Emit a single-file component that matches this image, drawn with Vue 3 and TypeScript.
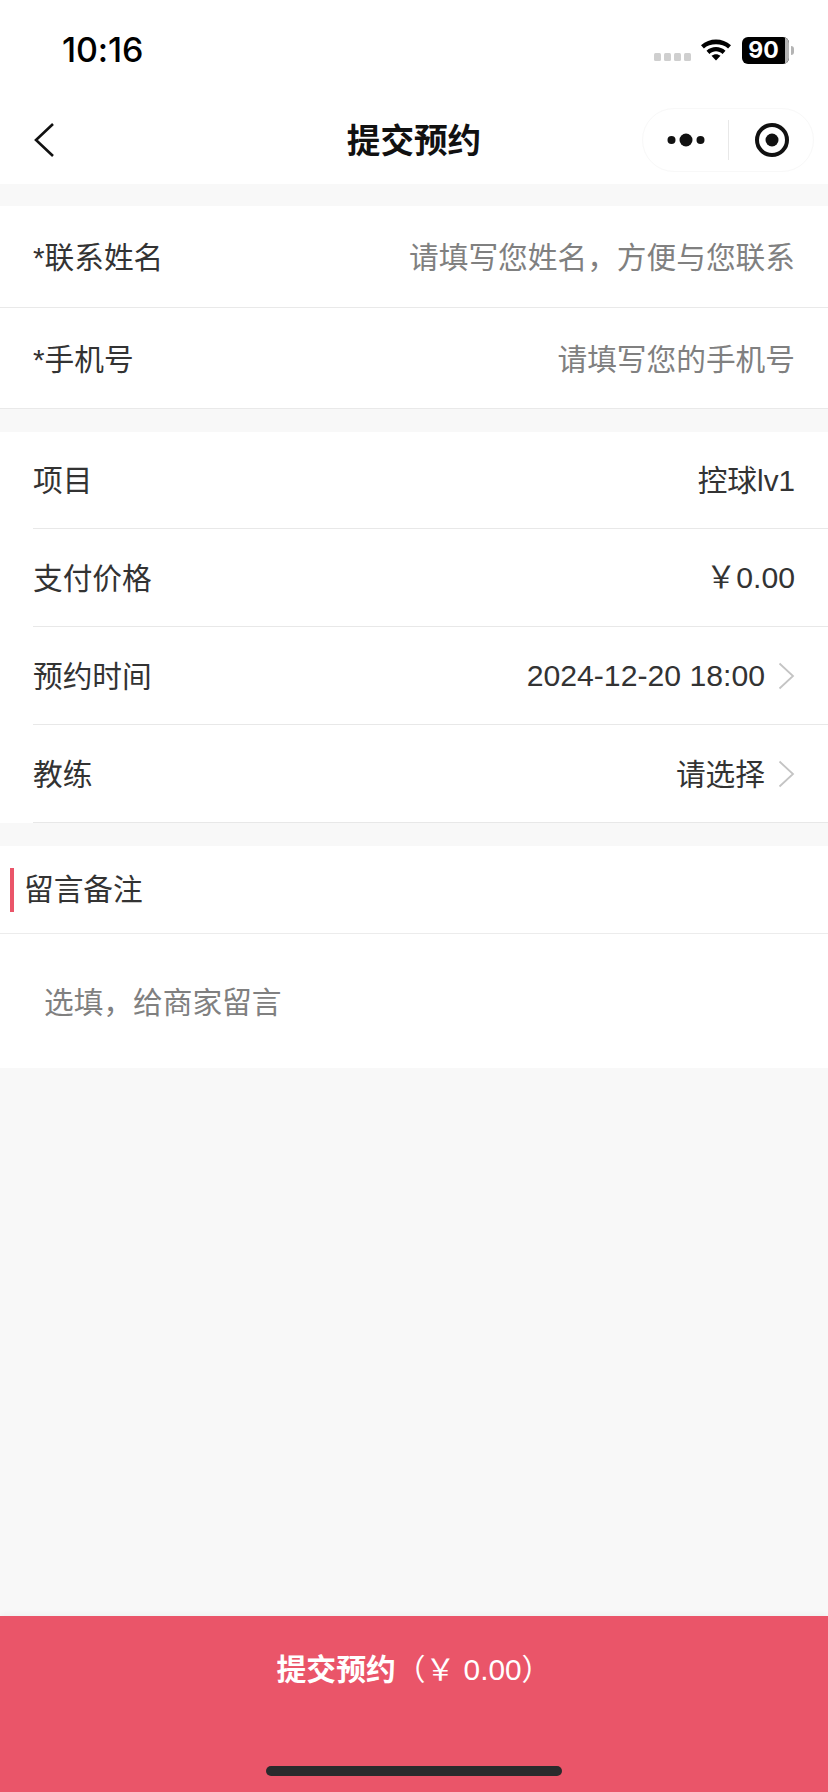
<script setup lang="ts">
interface InfoRow { label: string; value: string; arrow?: boolean; latin?: boolean }
const contactRows = [
  { label: '*联系姓名', hint: '请填写您姓名，方便与您联系' },
  { label: '*手机号', hint: '请填写您的手机号' },
]
const infoRows: InfoRow[] = [
  { label: '项目', value: '控球lv1' },
  { label: '支付价格', value: '￥0.00', latin: true },
  { label: '预约时间', value: '2024-12-20 18:00', arrow: true, latin: true },
  { label: '教练', value: '请选择', arrow: true },
]
</script>

<template>
  <div class="page">
    <header class="top">
      <div class="status">
        <span class="time">10:16</span>
        <div class="status-icons">
          <div class="signal"><i></i><i></i><i></i><i></i></div>
          <svg class="wifi" width="32" height="24" viewBox="0 0 32 24">
            <path d="M1 8.200C9.500 .6 22.500 .6 31 8.200l-2.900 3.200C22 5.800 10 5.800 3.900 11.400z" fill="#000"/>
            <path d="M6.500 13.800c5.500-5 13.500-5 19 0l-2.900 3.100c-4-3.400-9.200-3.400-13.200 0z" fill="#000"/>
            <path d="M11.500 18.800c2.700-2.200 6.300-2.200 9 0L16 23.500z" fill="#000"/>
          </svg>
          <div class="battery"><span class="level">90</span><span class="rest"></span></div>
          <span class="nub"></span>
        </div>
      </div>
      <div class="nav">
        <svg class="back" width="22" height="36" viewBox="0 0 22 36">
          <path d="M20 2 3 18l17 16" fill="none" stroke="#111" stroke-width="2.600"/>
        </svg>
        <span class="title">提交预约</span>
        <div class="capsule">
          <svg width="38" height="14" viewBox="0 0 38 14">
            <circle cx="4.500" cy="7" r="4" fill="#111"/>
            <circle cx="19" cy="7" r="6.500" fill="#111"/>
            <circle cx="33.500" cy="7" r="4" fill="#111"/>
          </svg>
          <span class="cap-line"></span>
          <svg width="36" height="36" viewBox="0 0 36 36">
            <circle cx="18" cy="18" r="15" fill="none" stroke="#111" stroke-width="4"/>
            <circle cx="18" cy="18" r="6.500" fill="#111"/>
          </svg>
        </div>
      </div>
    </header>

    <section class="group first">
      <div v-for="row in contactRows" :key="row.label" class="row contact">
        <span class="label">{{ row.label }}</span>
        <span class="hint">{{ row.hint }}</span>
      </div>
    </section>

    <section class="group">
      <div v-for="row in infoRows" :key="row.label" class="row info">
        <span class="label">{{ row.label }}</span>
        <div class="val-wrap">
          <span class="label" :class="{ latin: row.latin }">{{ row.value }}</span>
          <svg v-if="row.arrow" class="arrow" width="17" height="28" viewBox="0 0 17 28">
            <path d="M1.500 1.500 15 14 1.500 26.500" fill="none" stroke="#c4c4c4" stroke-width="1.800"/>
          </svg>
        </div>
      </div>
    </section>

    <section class="group remark">
      <div class="remark-head"><span class="bar"></span><span class="label">留言备注</span></div>
      <div class="remark-body"><span class="hint">选填，给商家留言</span></div>
    </section>

    <div class="spacer"></div>

    <footer class="submit">
      <div class="submit-text"><b>提交预约</b><span>（￥ 0.00）</span></div>
      <span class="home"></span>
    </footer>
  </div>
</template>

<style scoped>
.page {
  width: 828px;
  height: 1792px;
  display: flex;
  flex-direction: column;
  background: #f8f8f8;
  font-family: "Liberation Sans", "Noto Sans CJK SC", sans-serif;
  color: #333;
  overflow: hidden;
}
.top { background: #fff; height: 184px; flex: none; }
.status {
  height: 92px;
  padding: 8px 34px 0 62px;
  box-sizing: border-box;
  display: flex;
  align-items: center;
  justify-content: space-between;
}
.time { font: 500 34px/1 Inter, "Liberation Sans", sans-serif; color: #000; letter-spacing: -0.1px; }
.status-icons { display: flex; align-items: center; }
.signal { display: flex; gap: 3px; margin-right: 9px; margin-top: 13px; }
.signal i { width: 7px; height: 8px; border-radius: 1.500px; background: #cfcfcf; display: block; }
.wifi { margin-right: 10px; margin-top: -2px; }
.battery {
  width: 47px;
  height: 27px;
  border-radius: 6px;
  overflow: hidden;
  background: #000;
  display: flex;
}
.level {
  flex: 1;
  font: 700 23px/27px Inter, "Liberation Sans", sans-serif;
  color: #fff;
  text-align: center;
}
.rest { width: 4px; background: #b4b4b4; }
.nub { width: 3px; height: 9px; background: #b4b4b4; border-radius: 0 3px 3px 0; margin-left: 2px; }
.nav {
  height: 92px;
  position: relative;
  display: flex;
  align-items: center;
  justify-content: center;
}
.back { position: absolute; left: 33px; top: 30px; }
.title { font-size: 33.600px; font-weight: 700; color: #111; line-height: 1; margin-top: 7px; }
.capsule {
  position: absolute;
  left: 642px;
  top: 16px;
  width: 172px;
  height: 64px;
  box-sizing: border-box;
  border: 1px solid #f8f8f8;
  border-radius: 32px;
  display: flex;
  align-items: center;
  padding-left: 24px;
}
.cap-line { width: 1px; height: 40px; background: #e8e8e8; margin: 0 25px 0 23px; }
.group { background: #fff; margin-top: 23px; flex: none; }
.group.first { margin-top: 22px; }
.row {
  display: flex;
  align-items: center;
  justify-content: space-between;
  box-sizing: border-box;
  padding: 0 33px;
}
.contact { height: 102px; border-bottom: 1px solid #e9e9e9; padding-top: 3px; }
.contact:last-child { height: 101px; }
.info { height: 98px; position: relative; padding-top: 1px; }
.info::after {
  content: "";
  position: absolute;
  left: 33px;
  right: 0;
  bottom: 0;
  height: 1.500px;
  background: #e8e8e8;
}
.info:first-child { height: 97px; }
.label { font-size: 29.700px; color: #333; line-height: 1; }
.label.latin { font-size: 30.200px; }
.hint { font-size: 29.700px; color: #808080; line-height: 1; }
.val-wrap { display: flex; align-items: center; }
.arrow { margin-left: 13px; }
.remark-head {
  height: 88px;
  display: flex;
  align-items: center;
  border-bottom: 1px solid #ececec;
  box-sizing: border-box;
  padding-left: 10px;
}
.bar { width: 4px; height: 44px; background: #ea5569; margin-right: 10px; }
.remark-body {
  height: 134px;
  box-sizing: border-box;
  padding: 54px 0 0 44px;
}
.spacer { flex: 1; }
.submit {
  flex: none;
  height: 176px;
  background: #ea5569;
  position: relative;
  box-shadow: 0 -2px 6px rgba(0, 0, 0, 0.04);
}
.submit-text {
  position: absolute;
  left: 0;
  right: 0;
  top: 37px;
  display: flex;
  justify-content: center;
  color: #fff;
  font-size: 29.800px;
  line-height: 34px;
}
.submit-text b { font-weight: 700; }
.home {
  position: absolute;
  left: 266px;
  top: 150px;
  width: 296px;
  height: 10px;
  border-radius: 5px;
  background: #2a2a2c;
}
</style>
